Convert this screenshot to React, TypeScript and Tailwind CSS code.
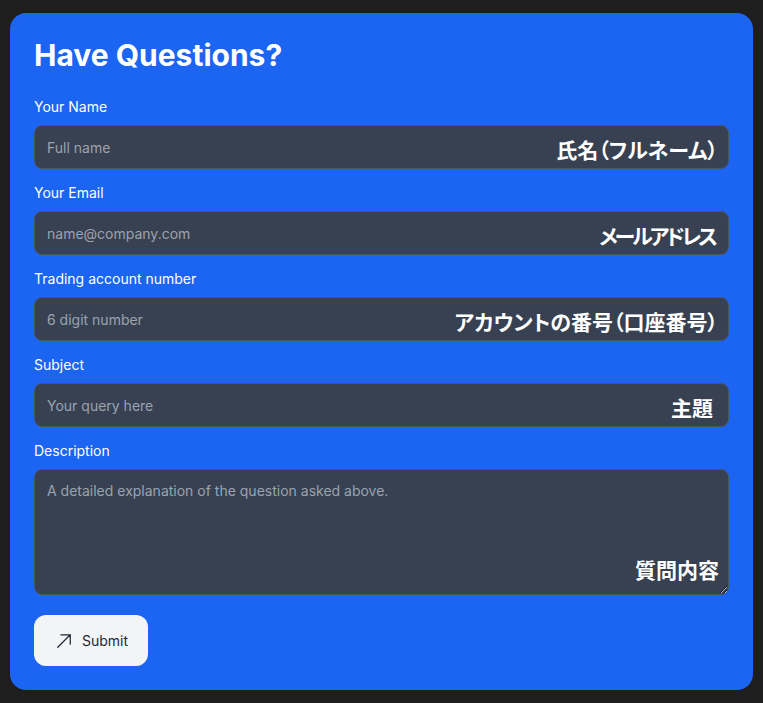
import React from "react";

const fields = [
  { label: "Your Name", placeholder: "Full name", jp: "氏名（フルネーム）", type: "text", extra: "right-[11px]" },
  { label: "Your Email", placeholder: "name@company.com", jp: "メールアドレス", type: "email", extra: "right-[14px] tracking-[-3px]" },
  { label: "Trading account number", placeholder: "6 digit number", jp: "アカウントの番号（口座番号）", type: "text", extra: "right-[11px]" },
  { label: "Subject", placeholder: "Your query here", jp: "主題", type: "text", extra: "right-[16px]" },
];

const jpClass =
  "pointer-events-none absolute text-[21px] leading-7 font-bold text-white [font-family:'Noto_Sans_CJK_JP',sans-serif] [font-feature-settings:'palt']";

export default function App() {
  return (
    <div className="min-h-screen bg-[#1e1e1e] px-[10px] py-[13px] [font-family:Inter,'Noto_Sans_CJK_JP',sans-serif]">
      <form
        className="rounded-2xl bg-[#1c64f2] p-6"
        onSubmit={(e) => e.preventDefault()}
      >
        <h2 className="mb-6 text-3xl font-bold text-white">Have Questions?</h2>

        <div className="flex flex-col gap-[14px]">
          {fields.map((f) => (
            <div key={f.label}>
              <label className="mb-2 block text-sm text-white">{f.label}</label>
              <div className="relative">
                <input
                  type={f.type}
                  placeholder={f.placeholder}
                  className="block h-[44px] w-full rounded-lg border border-[#4b5563] bg-[#374151] px-3 text-sm text-white placeholder:text-[#9ca3af] outline-none"
                />
                <span className={`${jpClass} ${f.extra} top-[10px]`}>{f.jp}</span>
              </div>
            </div>
          ))}

          <div>
            <label className="mb-2 block text-sm text-white">Description</label>
            <div className="relative">
              <textarea
                placeholder="A detailed explanation of the question asked above."
                className="block h-[126px] w-full rounded-lg border border-[#4b5563] bg-[#374151] px-3 py-[11px] text-sm text-white placeholder:text-[#9ca3af] outline-none"
              />
              <span className={`${jpClass} right-[10px] bottom-[12px]`}>質問内容</span>
            </div>
          </div>
        </div>

        <button
          type="submit"
          className="mt-[20px] flex h-[51px] items-center gap-2 rounded-xl bg-[#f3f4f6] px-5 text-sm text-[#1f2937]"
        >
          <svg
            className="h-5 w-5"
            fill="none"
            stroke="currentColor"
            strokeWidth={1.5}
            viewBox="0 0 24 24"
          >
            <path
              strokeLinecap="round"
              strokeLinejoin="round"
              d="m4.5 19.5 15-15m0 0H8.25m11.25 0v11.25"
            />
          </svg>
          Submit
        </button>
      </form>
    </div>
  );
}
